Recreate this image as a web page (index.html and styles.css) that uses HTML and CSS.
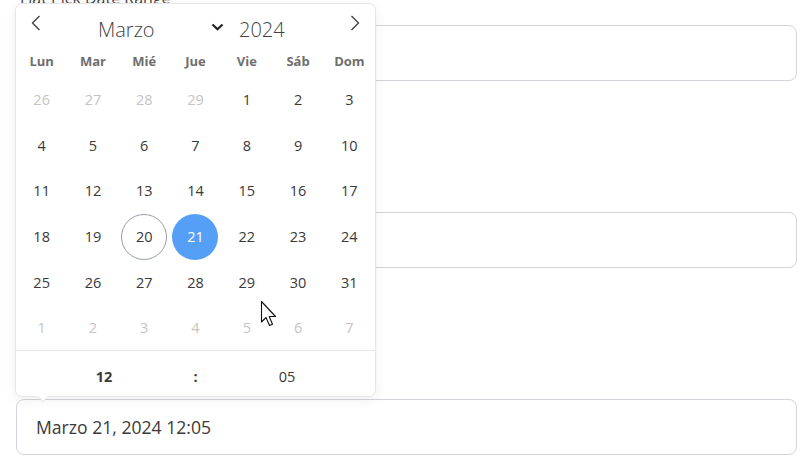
FILE: index.html
```html
<!DOCTYPE html>
<html lang="es">
<head>
<meta charset="utf-8">
<title>Flatpickr</title>
<link rel="stylesheet" href="styles.css">
</head>
<body>
<div class="page">
  <form class="form">
    <div class="field">
      <label class="label">Flat Pick Date Range</label>
      <div class="input"></div>
    </div>
    <div class="field">
      <label class="label">Flat Pick Date</label>
      <div class="input"></div>
    </div>
    <div class="field">
      <label class="label">Flat Pick Date Time</label>
      <div class="input">Marzo 21, 2024 12:05</div>
    </div>
  </form>

  <div class="calendar">
    <div class="months">
      <span class="nav prev"><svg width="10" height="16" viewBox="0 0 10 16"><path d="M8.5 1 L1.5 8 L8.5 15" fill="none" stroke="#3c3c3c" stroke-width="1.3"/></svg></span>
      <div class="current">
        <span class="month">Marzo</span>
        <svg class="chev" width="13" height="8" viewBox="0 0 13 8"><path d="M1.5 1.5 L6.5 6.2 L11.5 1.5" fill="none" stroke="#222" stroke-width="2.2"/></svg>
        <span class="year">2024</span>
      </div>
      <span class="nav next"><svg width="10" height="16" viewBox="0 0 10 16"><path d="M1.5 1 L8.5 8 L1.5 15" fill="none" stroke="#3c3c3c" stroke-width="1.3"/></svg></span>
    </div>
    <div class="weekdays">
      <span>Lun</span><span>Mar</span><span>Mié</span><span>Jue</span><span>Vie</span><span>Sáb</span><span>Dom</span>
    </div>
    <div class="days">
      <span class="day other">26</span><span class="day other">27</span><span class="day other">28</span><span class="day other">29</span><span class="day">1</span><span class="day">2</span><span class="day">3</span>
      <span class="day">4</span><span class="day">5</span><span class="day">6</span><span class="day">7</span><span class="day">8</span><span class="day">9</span><span class="day">10</span>
      <span class="day">11</span><span class="day">12</span><span class="day">13</span><span class="day">14</span><span class="day">15</span><span class="day">16</span><span class="day">17</span>
      <span class="day">18</span><span class="day">19</span><span class="day"><i class="today">20</i></span><span class="day"><i class="selected">21</i></span><span class="day">22</span><span class="day">23</span><span class="day">24</span>
      <span class="day">25</span><span class="day">26</span><span class="day">27</span><span class="day">28</span><span class="day">29</span><span class="day">30</span><span class="day">31</span>
      <span class="day other">1</span><span class="day other">2</span><span class="day other">3</span><span class="day other">4</span><span class="day other">5</span><span class="day other">6</span><span class="day other">7</span>
    </div>
    <div class="time">
      <span class="hour">12</span>
      <span class="sep">:</span>
      <span class="minute">05</span>
    </div>
  </div>

  <svg class="cursor" width="20" height="30" viewBox="0 0 20 30"><path d="M1.5 1.5 L1.5 22 L6 17.5 L9.5 25.5 L12.5 24.2 L9.2 16.5 L15.5 16.5 Z" fill="#fff" stroke="#111" stroke-width="1.1" stroke-linejoin="round"/></svg>
</div>
</body>
</html>
```

FILE: styles.css
```css
* { box-sizing: border-box; }
html, body { margin: 0; padding: 0; background: #fff; }
body {
  font-family: "Open Sans", "Noto Sans", "Liberation Sans", sans-serif;
  color: #393939;
  overflow: hidden;
}
.page {
  position: relative;
  width: 808px;
  height: 464px;
  overflow: hidden;
}
.form {
  padding-left: 16px;
  margin-top: -12px;
  width: 797px;
}
.field {
  display: flex;
  flex-direction: column;
  margin-bottom: 94px;
}
.label {
  font-size: 16px;
  line-height: 20px;
  color: #444;
  padding-left: 4px;
  margin-bottom: 17px;
}
.input {
  height: 56px;
  border: 1px solid #d4d4da;
  border-radius: 8px;
  padding: 0 19px;
  display: flex;
  align-items: center;
  font-size: 17.6px;
  color: #3a3a3a;
}

.calendar {
  position: absolute;
  left: 16px;
  top: 4px;
  width: 359px;
  height: 392px;
  background: #fff;
  border-radius: 6px;
  box-shadow: 1px 0 0 #e6e6e6, -1px 0 0 #e6e6e6, 0 1px 0 #e6e6e6, 0 -1px 0 #e6e6e6, 0 3px 13px rgba(0,0,0,0.08);
  display: flex;
  flex-direction: column;
}
.calendar::before,
.calendar::after {
  content: "";
  position: absolute;
  left: 22px;
  top: 100%;
  border: solid transparent;
}
.calendar::before {
  border-width: 6px;
  margin-left: -1px;
  border-top-color: #e6e6e6;
}
.calendar::after {
  border-width: 5px;
  border-top-color: #fff;
}
.months {
  height: 40px;
  display: flex;
  align-items: center;
  position: relative;
}
.nav {
  width: 40px;
  display: flex;
  justify-content: center;
  margin-top: -2px;
}
.current {
  flex: 1;
  display: flex;
  align-items: center;
  padding-left: 42px;
  font-weight: 300;
  font-size: 20px;
  color: #444;
  margin-top: 10px;
}
.month { width: 113px; }
.chev { margin-top: -4px; margin-right: 15px; }
.weekdays {
  height: 33px;
  display: grid;
  grid-template-columns: repeat(7, 1fr);
  align-items: center;
  font-size: 13px;
  font-weight: 700;
  color: #6e6e6e;
  text-align: center;
}
.days {
  display: grid;
  grid-template-columns: repeat(7, 1fr);
  grid-auto-rows: 45.6px;
  font-size: 14.5px;
  height: 273px;
}
.day {
  display: flex;
  align-items: center;
  justify-content: center;
  color: #393939;
}
.day.other { color: #c4c4c4; }
.day i {
  font-style: normal;
  width: 46px;
  height: 46px;
  border-radius: 50%;
  display: flex;
  align-items: center;
  justify-content: center;
}
.today { border: 1px solid #959ea9; }
.selected { background: #569ff7; color: #fff; }
.time {
  flex: 1;
  border-top: 1px solid #e6e6e6;
  display: flex;
  align-items: center;
  font-size: 14.5px;
  padding-top: 5px;
}
.hour, .minute { flex: 1; text-align: center; }
.hour { font-weight: 700; }
.sep { width: 7px; text-align: center; font-weight: 700; }
.cursor {
  position: absolute;
  left: 260px;
  top: 300px;
}
```
